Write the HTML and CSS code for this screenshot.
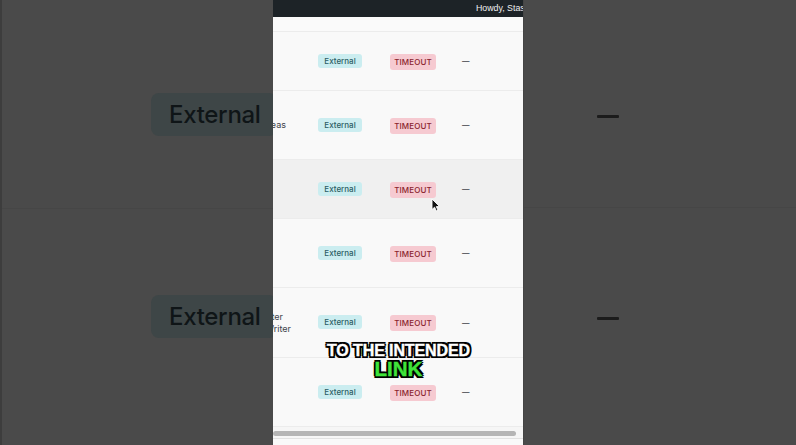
FILE: index.html
```html
<!DOCTYPE html>
<html lang="en">
<head>
<meta charset="utf-8">
<title>Links</title>
<link rel="stylesheet" href="styles.css">
</head>
<body>
<div class="stage">
  <div class="side side-left">
    <div class="ghost-badge first">External</div>
    <div class="ghost-rule"></div>
    <div class="ghost-badge second">External</div>
  </div>

  <div class="panel">
    <div class="topbar"><span class="howdy">Howdy, Stashed</span></div>
    <div class="thead"></div>
    <div class="rows">
      <div class="row h59">
        <div class="title"></div>
        <div class="cell"><span class="badge ext">External</span></div>
        <div class="cell"><span class="badge tmo">TIMEOUT</span></div>
        <div class="cell dash">—</div>
      </div>
      <div class="row h69">
        <div class="title"><span class="line">Blog Post Ideas</span></div>
        <div class="cell"><span class="badge ext">External</span></div>
        <div class="cell"><span class="badge tmo">TIMEOUT</span></div>
        <div class="cell dash">—</div>
      </div>
      <div class="row h59 hover">
        <div class="title"></div>
        <div class="cell"><span class="badge ext">External</span></div>
        <div class="cell"><span class="badge tmo">TIMEOUT</span></div>
        <div class="cell dash">—</div>
      </div>
      <div class="row h69">
        <div class="title"></div>
        <div class="cell"><span class="badge ext">External</span></div>
        <div class="cell"><span class="badge tmo">TIMEOUT</span></div>
        <div class="cell dash">—</div>
      </div>
      <div class="row h70">
        <div class="title two">
          <span class="line l1">AI Twitter</span>
          <span class="line">Thread Writer</span>
        </div>
        <div class="cell"><span class="badge ext">External</span></div>
        <div class="cell"><span class="badge tmo">TIMEOUT</span></div>
        <div class="cell dash">—</div>
      </div>
      <div class="row h69">
        <div class="title"></div>
        <div class="cell"><span class="badge ext">External</span></div>
        <div class="cell"><span class="badge tmo">TIMEOUT</span></div>
        <div class="cell dash">—</div>
      </div>
    </div>
    <div class="hscroll"><div class="thumb"></div></div>
    <div class="foot"></div>

    <div class="caption">
      <div class="cap-white">TO THE INTENDED</div>
      <div class="cap-green">LINK</div>
    </div>

    <svg class="cursor" width="10" height="14" viewBox="0 0 10 14" aria-hidden="true">
      <path d="M1 1 L1 11.5 L3.6 9.2 L5.4 13 L7 12.3 L5.3 8.6 L8.6 8.6 Z" fill="#111" stroke="#fff" stroke-width="0.9" stroke-linejoin="round"/>
    </svg>
  </div>

  <div class="side side-right">
    <div class="ghost-dash first"></div>
    <div class="ghost-rule"></div>
    <div class="ghost-dash second"></div>
  </div>
</div>
</body>
</html>
```

FILE: styles.css
```css
html, body {
  margin: 0;
  padding: 0;
}

body {
  width: 796px;
  height: 445px;
  overflow: hidden;
  background: #4a4a4a;
  font-family: Inter, "Liberation Sans", sans-serif;
}

.stage {
  display: grid;
  grid-template-columns: 273px 250px 1fr;
  height: 445px;
}

/* blurred background copies */
.side {
  display: flex;
  flex-direction: column;
  overflow: hidden;
  background: #4a4a4a;
}

.side-left {
  border-left: 2px solid #3d3d3d;
}

.ghost-badge {
  box-sizing: border-box;
  width: 126px;
  height: 43px;
  margin-left: 149px;
  padding-left: 18px;
  display: flex;
  align-items: center;
  background: #3e4647;
  border-radius: 8px;
  color: #0f1517;
  font-family: Inter, "Liberation Sans", sans-serif;
  font-size: 24px;
  font-weight: 500;
  letter-spacing: -0.3px;
}

.ghost-badge.first {
  margin-top: 93px;
}

.ghost-rule {
  height: 1px;
  margin-top: 72px;
  background: #464646;
}

.ghost-badge.second {
  margin-top: 86px;
}

.side-right {
  border-left: 1px solid #454545;
}

.ghost-dash {
  width: 22px;
  height: 3px;
  margin-left: 73px;
  background: #1c1c1c;
  border-radius: 1px;
}

.side-right .ghost-dash.first {
  margin-top: 115px;
}

.side-right .ghost-rule {
  margin-top: 89px;
}

.side-right .ghost-dash.second {
  margin-top: 109px;
}

/* centre panel */
.panel {
  position: relative;
  display: flex;
  flex-direction: column;
  overflow: hidden;
  background: #f9f9f9;
}

.topbar {
  height: 17px;
  flex: none;
  display: flex;
  align-items: center;
  padding-left: 203px;
  background: #1d2327;
  white-space: nowrap;
}

.howdy {
  color: #f0f0f1;
  font-family: "Liberation Sans", Arial, sans-serif;
  font-size: 8.8px;
  line-height: 1;
}

.thead {
  height: 14px;
  flex: none;
  background: #fafafa;
  border-bottom: 1px solid #ececec;
}

.rows {
  display: flex;
  flex-direction: column;
}

.row {
  box-sizing: border-box;
  display: grid;
  grid-template-columns: 45px 72px 71px 1fr;
  align-items: center;
  background: #f9f9f9;
  border-bottom: 1px solid #ececec;
}

.row.hover {
  background: #f0f0f0;
}

.h59 { height: 59px; }
.h69 { height: 69px; }
.h70 { height: 70px; }

.title {
  display: flex;
  flex-direction: column;
  align-items: flex-end;
  padding-right: 32px;
  overflow: hidden;
  color: #3c434a;
  font-size: 9px;
  line-height: 12px;
  white-space: nowrap;
}

.title.two {
  padding-right: 27px;
}

.title .l1 {
  margin-right: 8px;
}

.cell {
  display: flex;
  align-items: center;
}

.badge {
  display: inline-flex;
  align-items: center;
  justify-content: center;
  border-radius: 3px;
  font-size: 8px;
  font-weight: 500;
  white-space: nowrap;
}

.badge.ext {
  width: 44px;
  height: 14px;
  margin-top: -1px;
  background: #cbedf0;
  color: #2b5e65;
}

.badge.tmo {
  width: 46px;
  height: 16px;
  margin-top: 1px;
  background: #f6cad1;
  color: #8a1f2e;
  letter-spacing: 0.1px;
}

.dash {
  padding-left: 1px;
  color: #3c434a;
  font-family: "Liberation Sans", Arial, sans-serif;
  font-size: 7.5px;
  font-weight: 700;
  line-height: 1;
}

.hscroll {
  box-sizing: border-box;
  height: 11px;
  flex: none;
  padding-top: 4px;
  background: #f6f6f6;
}

.thumb {
  width: 243px;
  height: 5px;
  border-radius: 3px;
  background: #b5b5b5;
}

.foot {
  flex: 1;
  background: #f9f9f9;
  border-top: 1px solid #e2e2e2;
}

/* video caption overlay */
.caption {
  position: absolute;
  left: 0;
  right: 0;
  top: 343px;
  display: flex;
  flex-direction: column;
  align-items: center;
  padding-left: 1px;
  font-family: "Liberation Sans", Arial, sans-serif;
  font-weight: 700;
  text-align: center;
  text-shadow:
    -1.7px -1.7px 0 #000, 1.7px -1.7px 0 #000,
    -1.7px 1.7px 0 #000, 1.7px 1.7px 0 #000,
    0 -2px 0 #000, 0 2px 0 #000,
    -2px 0 0 #000, 2px 0 0 #000,
    0 0 3px rgba(0, 0, 0, 0.7);
}

.cap-white {
  color: #ffffff;
  font-size: 16px;
  line-height: 16px;
  letter-spacing: -0.1px;
  -webkit-text-stroke: 0.4px #fff;
}

.cap-green {
  color: #3fe43a;
  font-size: 20.5px;
  line-height: 19px;
  -webkit-text-stroke: 0.4px #3fe43a;
}

.cursor {
  position: absolute;
  left: 158px;
  top: 198px;
}
```
